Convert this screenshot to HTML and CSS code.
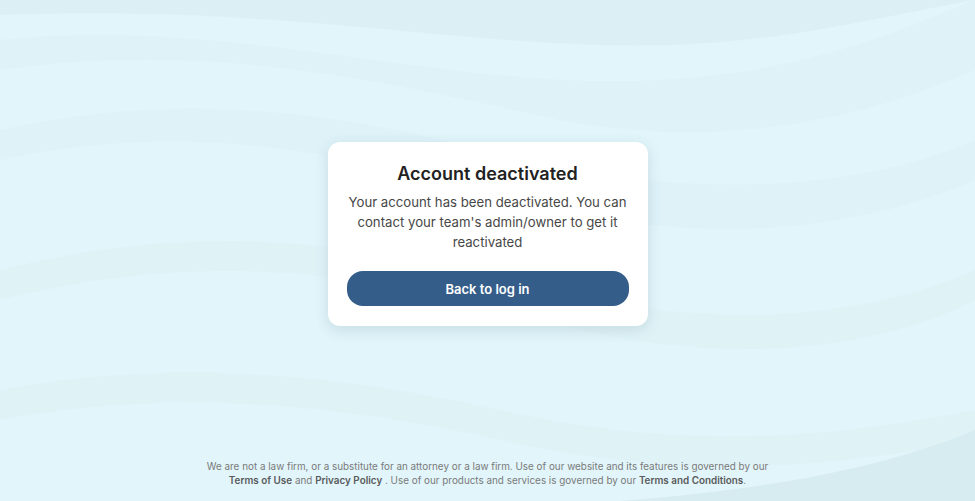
FILE: index.html
```html
<!DOCTYPE html>
<html lang="en">
<head>
  <meta charset="UTF-8" />
  <title>Account deactivated</title>
  <link rel="stylesheet" href="styles.css">
</head>
<body>

<svg class="waves" viewBox="0 0 975 501" preserveAspectRatio="none" aria-hidden="true">
  <path d="M0 0 H975 V0 C860 20 760 50 600 45 C420 40 260 5 0 15 Z" fill="#d9eef4" opacity="0.8" />
  <path d="M0 70 C200 40 380 80 560 120 C720 150 860 120 975 70 V0 C880 40 760 90 560 80 C380 70 200 20 0 40 Z" fill="#dcf0f5" opacity="0.5" />
  <path d="M0 160 C180 120 340 150 520 200 C700 250 860 230 975 180 V140 C860 190 700 200 520 160 C340 110 180 90 0 130 Z" fill="#d9eef3" opacity="0.35" />
  <path d="M0 300 C200 250 360 270 540 320 C720 370 880 350 975 300 V270 C860 320 720 330 540 290 C360 240 200 220 0 270 Z" fill="#d9eef3" opacity="0.3" />
  <path d="M0 420 C160 390 320 400 500 440 C680 480 820 470 975 440 V410 C820 440 680 450 500 410 C320 370 160 360 0 390 Z" fill="#d9eef3" opacity="0.3" />
  <path d="M620 501 C760 490 880 470 975 430 V501 Z" fill="#d7ecf1" />
</svg>

<main class="page">
  <div class="card">
    <h1>Account deactivated</h1>
    <p>Your account has been deactivated. You can contact your team's admin/owner to get it reactivated</p>
    <button type="button" class="btn-back">Back to log in</button>
  </div>
</main>

<footer class="legal">
  <p>We are not a law firm, or a substitute for an attorney or a law firm. Use of our website and its features is governed by our
  <a href="#">Terms of Use</a> and <a href="#">Privacy Policy</a> . Use of our products and services is governed by our <a href="#">Terms and Conditions</a>.</p>
</footer>

</body>
</html>
```

FILE: styles.css
```css
html, body {
  height: 100%;
}

body {
  margin: 0;
  font-family: Inter, "Noto Sans", Arial, sans-serif;
  background: #e1f5fa;
  display: flex;
  flex-direction: column;
  position: relative;
  overflow: hidden;
}

.waves {
  position: absolute;
  top: 0;
  left: 0;
  width: 100%;
  height: 100%;
  z-index: 0;
}

.page {
  flex: 1;
  display: flex;
  align-items: center;
  justify-content: center;
  position: relative;
  z-index: 1;
  padding-top: 8px;
}

.card {
  width: 282px;
  padding: 20px 19px;
  background: #fff;
  border-radius: 12px;
  box-shadow: 0 4px 14px rgba(60, 100, 120, 0.16);
  text-align: center;
}

.card h1 {
  margin: 0;
  font-size: 18px;
  line-height: 24px;
  font-weight: 600;
  color: #222;
}

.card p {
  margin: 6px 0 19px;
  font-size: 13.2px;
  line-height: 20px;
  color: #474747;
}

.btn-back {
  width: 100%;
  height: 35px;
  border: none;
  border-radius: 16px;
  background: #355d8a;
  color: #fff;
  font-family: inherit;
  font-size: 13px;
  font-weight: 600;
  cursor: pointer;
}

.legal {
  position: relative;
  z-index: 1;
  padding: 0 0 14px;
  text-align: center;
}

.legal p {
  margin: 0 auto;
  max-width: 580px;
  font-size: 9.9px;
  line-height: 13.5px;
  color: #7a7a7a;
}

.legal a {
  color: #5a5a5a;
  font-weight: 600;
  text-decoration: none;
}
```
